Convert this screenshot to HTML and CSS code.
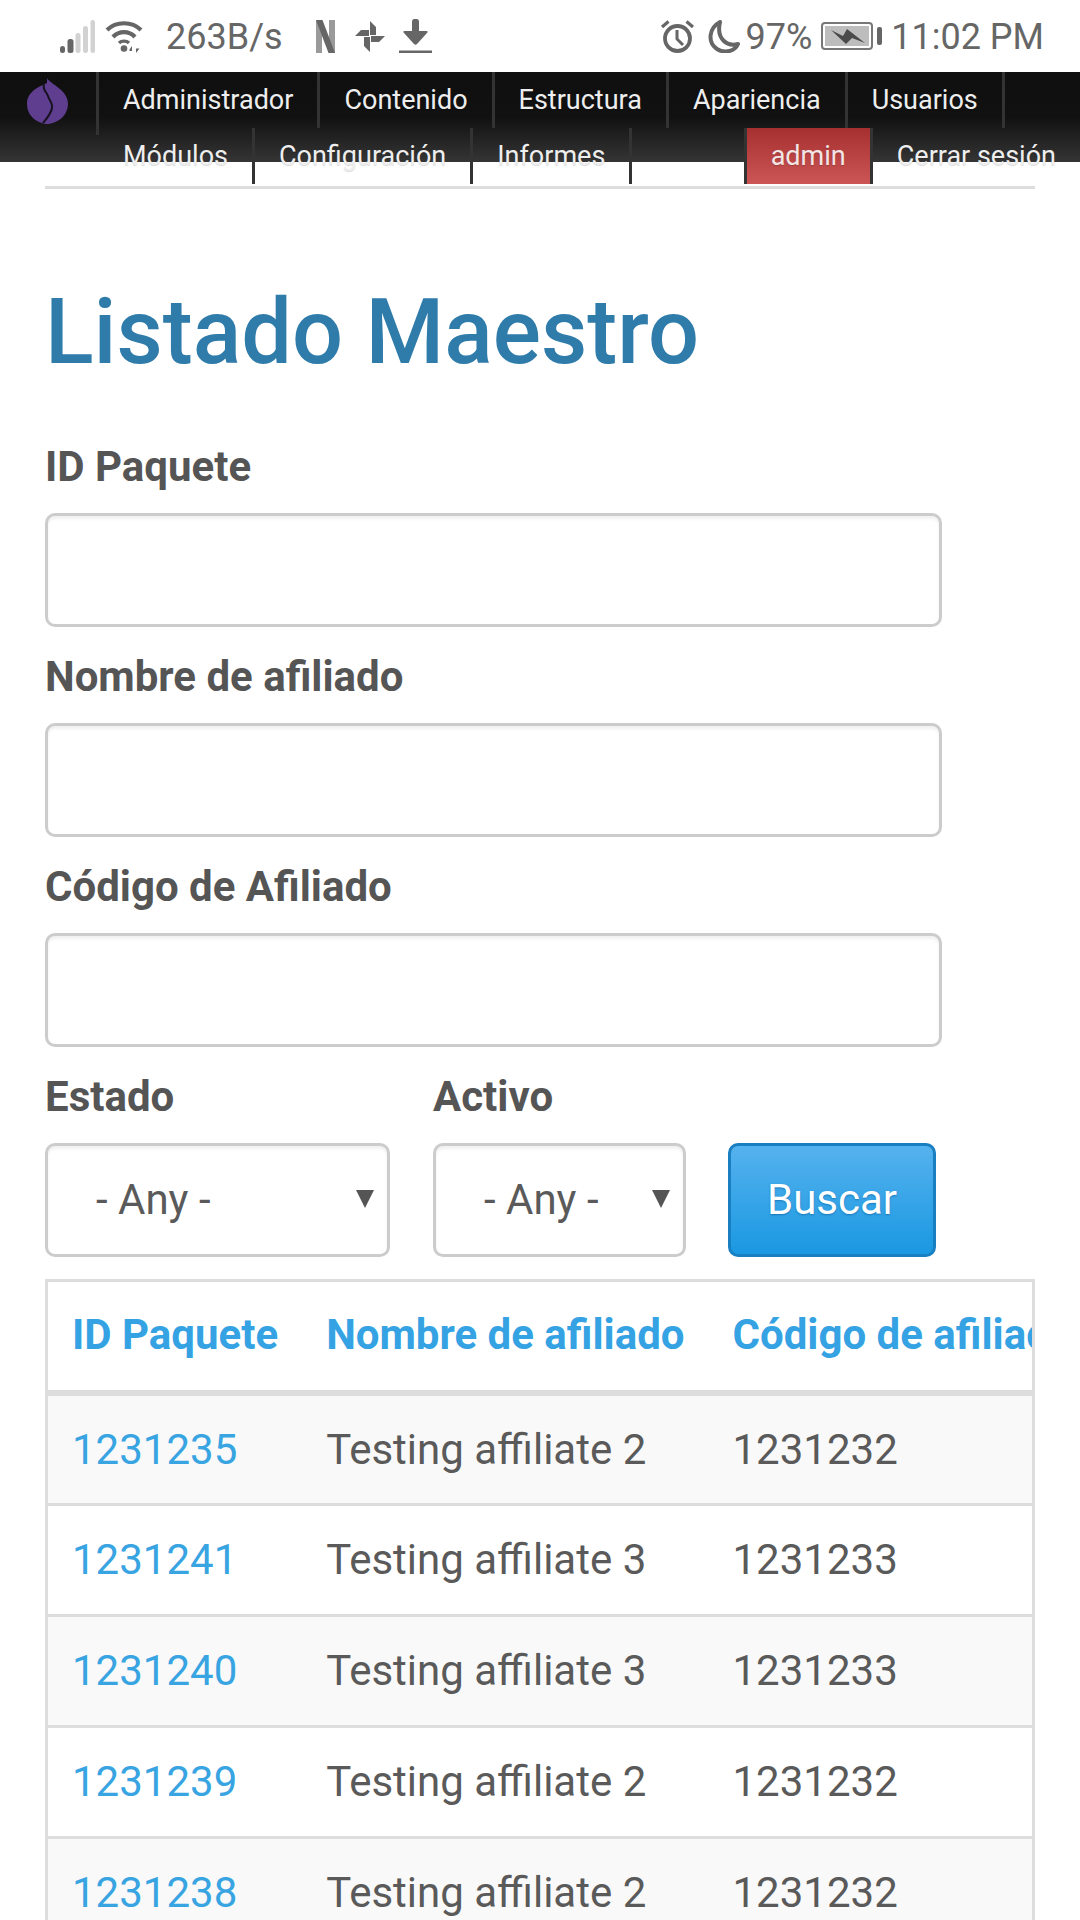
FILE: index.html
```html
<!DOCTYPE html>
<html lang="es">
<head>
<meta charset="utf-8">
<title>Listado Maestro</title>
<link rel="stylesheet" href="styles.css">
</head>
<body>
<header class="status">
  <div class="status-left">
    <svg class="i-signal" width="35" height="33" viewBox="0 0 35 33">
      <rect x="0" y="26" width="5" height="7" rx="2.5" fill="#666"/>
      <rect x="7.5" y="19" width="6" height="14" rx="2.5" fill="#666"/>
      <rect x="15.5" y="13" width="5" height="20" rx="2.5" fill="#d2d2d2"/>
      <rect x="23" y="6" width="5" height="27" rx="2.5" fill="#d2d2d2"/>
      <rect x="30.5" y="0" width="4.5" height="33" rx="2.2" fill="#d2d2d2"/>
    </svg>
    <svg class="i-wifi" width="38" height="33" viewBox="0 0 38 33">
      <path d="M2 10 C11 1 27 1 36 10" fill="none" stroke="#666" stroke-width="4.2"/>
      <path d="M8 17 C14 10.500 24 10.500 30 17" fill="none" stroke="#666" stroke-width="4.2"/>
      <path d="M14 23 C16.500 20.500 21.500 20.500 24 23" fill="none" stroke="#666" stroke-width="3.4"/>
      <circle cx="19" cy="28.500" r="3.300" fill="#666"/>
      <path d="M27 33V26L24.500 29.500V31H27ZM31 24V33L34.500 28.500H31Z" fill="#666"/>
    </svg>
    <span class="speed">263B/s</span>
    <svg class="i-n" width="19" height="33" viewBox="0 0 19 33">
      <rect x="0" y="0" width="6" height="33" fill="#9a9a9a"/>
      <rect x="13" y="0" width="6" height="33" fill="#9a9a9a"/>
      <path d="M0 0H6.500L19 33H12.500Z" fill="#666"/>
    </svg>
    <svg class="i-pin" width="30" height="31" viewBox="0 0 30 31">
      <path d="M15 14V0L21 6V14ZM16 15H30L24 21H16ZM15 16V31L9 25V16ZM14 15H0L6 9H14Z" fill="#666"/>
    </svg>
    <svg class="i-dl" width="33" height="34" viewBox="0 0 33 34">
      <path d="M13 2.500Q13 0 15 0H18Q20 0 20 2.500V12H27.500Q29.500 12 28 14L18 25Q16.500 26.500 15 25L5 14Q3.500 12 5.500 12H13Z" fill="#666"/>
      <rect x="0" y="31.500" width="33" height="2.500" fill="#666"/>
    </svg>
  </div>
  <div class="status-right">
    <svg class="i-alarm" width="35" height="33" viewBox="0 0 35 33">
      <circle cx="17.500" cy="18.500" r="12.500" fill="none" stroke="#666" stroke-width="3.800"/>
      <path d="M17 10V19L23 25" fill="none" stroke="#666" stroke-width="3"/>
      <path d="M2 7L8.500 1.500M33 7L26.500 1.500" fill="none" stroke="#666" stroke-width="3.200"/>
    </svg>
    <svg class="i-moon" width="33" height="33" viewBox="0 0 33 33">
      <path d="M13 2C2 8 0 22 10 29C18 34 28 31 31 24C20 27 9 19 13 2Z" fill="none" stroke="#666" stroke-width="4" stroke-linejoin="round"/>
    </svg>
    <span class="pct">97%</span>
    <svg class="i-batt" width="62" height="28" viewBox="0 0 62 28">
      <rect x="1" y="1" width="50" height="26" rx="3" fill="#fff" stroke="#777" stroke-width="2"/>
      <rect x="4" y="4" width="44" height="20" fill="#bdbdbd"/>
      <path d="M10 8L22 14L26 7L44 21L31 16L25 22Z" fill="#4a4a4a"/>
      <rect x="56" y="5" width="5" height="18" rx="2" fill="#666"/>
    </svg>
    <span class="time">11:02 PM</span>
  </div>
</header>

<nav class="toolbar">
  <div class="brand">
    <svg class="logo" width="42" height="46" viewBox="0 0 42 46">
      <path d="M20 0C23 6 42 12 41 27C40 38 32 44 22 46C10 46 0 38 0 26C0 14 11 9 20 5Z" fill="#5f3d8f"/>
      <path d="M17 6C15 12 20 14 21 18C22 22 26 25 25 30C24 36 20 40 16 45" fill="none" stroke="#17121f" stroke-width="2"/>
    </svg>
  </div>
  <div class="menus">
    <ul class="menu menu-top">
      <li class="item">Administrador</li>
      <li class="item">Contenido</li>
      <li class="item">Estructura</li>
      <li class="item">Apariencia</li>
      <li class="item">Usuarios</li>
    </ul>
    <div class="menu-second">
      <ul class="menu">
        <li class="item">Módulos</li>
        <li class="item">Configuración</li>
        <li class="item">Informes</li>
      </ul>
      <ul class="menu menu-user">
        <li class="item item-active">admin</li>
        <li class="item">Cerrar sesión</li>
      </ul>
    </div>
  </div>
</nav>

<main class="page">
  <hr class="rule">
  <h1 class="title">Listado Maestro</h1>
  <form class="filters">
    <div class="field">
      <label class="label" for="f1">ID Paquete</label>
      <input class="input" id="f1" type="text">
    </div>
    <div class="field">
      <label class="label" for="f2">Nombre de afiliado</label>
      <input class="input" id="f2" type="text">
    </div>
    <div class="field">
      <label class="label" for="f3">Código de Afiliado</label>
      <input class="input" id="f3" type="text">
    </div>
    <div class="inline">
      <div class="field field-estado">
        <label class="label" for="f4">Estado</label>
        <div class="select-wrap"><select class="select" id="f4"><option>- Any -</option></select></div>
      </div>
      <div class="field field-activo">
        <label class="label" for="f5">Activo</label>
        <div class="select-wrap"><select class="select" id="f5"><option>- Any -</option></select></div>
      </div>
      <button class="btn" type="button">Buscar</button>
    </div>
  </form>
  <div class="table-wrap">
    <table class="table">
      <thead>
        <tr><th>ID Paquete</th><th>Nombre de afiliado</th><th>Código de afiliado</th></tr>
      </thead>
      <tbody>
        <tr><td><a class="link">1231235</a></td><td>Testing affiliate 2</td><td>1231232</td></tr>
        <tr><td><a class="link">1231241</a></td><td>Testing affiliate 3</td><td>1231233</td></tr>
        <tr><td><a class="link">1231240</a></td><td>Testing affiliate 3</td><td>1231233</td></tr>
        <tr><td><a class="link">1231239</a></td><td>Testing affiliate 2</td><td>1231232</td></tr>
        <tr><td><a class="link">1231238</a></td><td>Testing affiliate 2</td><td>1231232</td></tr>
      </tbody>
    </table>
  </div>
</main>
</body>
</html>
```
FILE: styles.css
```css
* { box-sizing: border-box; }
html, body { margin: 0; padding: 0; }
body {
  width: 1080px;
  height: 1920px;
  overflow: hidden;
  background: #fff;
  font-family: Roboto, "Liberation Sans", sans-serif;
  color: #555;
}

/* status bar */
.status {
  height: 72px;
  display: flex;
  justify-content: space-between;
  align-items: center;
  padding: 0 36px 0 60px;
  color: #666;
  font-size: 36px;
}
.status-left, .status-right { display: flex; align-items: center; }
.status svg { display: block; }
.speed, .pct, .time { padding-top: 2px; }
.i-wifi { margin-left: 10px; }
.speed { margin-left: 23px; }
.i-n { margin-left: 33px; }
.i-pin { margin-left: 20px; }
.i-dl { margin-left: 14px; }
.i-moon { margin-left: 12px; }
.pct { margin-left: 5px; }
.i-batt { margin-left: 9px; }
.time { margin-left: 8px; }

/* toolbar */
.toolbar {
  height: 90px;
  display: flex;
  background: linear-gradient(#0f0f0f 0%, #111 50%, #353535 100%);
  color: #eee;
  font-size: 27px;
}
.brand {
  width: 99px;
  height: 63px;
  padding: 6px 0 0 27px;
  border-right: 3px solid #333;
  flex: none;
}
.logo { display: block; }
.menus { flex: 1; min-width: 0; }
.menu { display: flex; list-style: none; margin: 0; padding: 0; }
.menu-top { height: 56px; }
.menu-second { display: flex; justify-content: space-between; height: 56px; }
.item {
  padding: 0 24px;
  height: 56px;
  line-height: 56px;
  border-right: 3px solid #333;
  white-space: nowrap;
  text-shadow: 0 1px 1px rgba(0,0,0,.15);
}
.menu-user .item { border-right: 0; }
.menu-user .item-active {
  padding: 0 24px;
  background: linear-gradient(#a62f2f, #cc5555);
  border-left: 3px solid #333;
  border-right: 3px solid #333;
  color: #f2e5e5;
}

/* page */
.page { padding: 24px 45px 0; }
.rule { height: 3px; margin: 0; border: 0; background: #ddd; }
.title {
  margin: 94px 0 0;
  font-size: 90px;
  line-height: 100px;
  font-weight: 500;
  color: #2f7cab;
}
.filters { margin-top: 61px; }
.field { display: flex; flex-direction: column; }
.label {
  font-size: 42px;
  line-height: 46px;
  font-weight: 700;
  color: #555;
}
.input {
  display: block;
  width: 897px;
  height: 114px;
  margin: 23px 0 27px;
  border: 3px solid #ccc;
  border-radius: 10px;
  background: #fff;
  box-shadow: inset 0 3px 3px rgba(0,0,0,.06);
  outline: 0;
}
.inline { display: flex; align-items: flex-end; }
.field-estado { width: 345px; }
.field-activo { width: 253px; margin-left: 43px; }
.select-wrap { position: relative; margin-top: 23px; }
.select-wrap::after {
  content: "";
  position: absolute;
  right: 16px;
  top: 47px;
  border-left: 9px solid transparent;
  border-right: 9px solid transparent;
  border-top: 18px solid #555;
}
.select {
  display: block;
  width: 100%;
  height: 114px;
  padding: 0 48px 2px;
  border: 3px solid #ccc;
  border-radius: 10px;
  background: #fff;
  box-shadow: inset 0 3px 3px rgba(0,0,0,.06);
  font: 400 42px Roboto, sans-serif;
  color: #5a5a5a;
  appearance: none;
  outline: 0;
}
.btn {
  width: 208px;
  height: 114px;
  margin-left: 42px;
  padding: 0 0 2px;
  border: 3px solid #1a7fc0;
  border-radius: 10px;
  background: linear-gradient(#55b2ee, #1a98e2);
  color: #fff;
  font: 400 42px Roboto, sans-serif;
  text-shadow: 0 1px 2px rgba(0,80,140,.5);
}

/* table */
.table-wrap {
  width: 990px;
  margin-top: 22px;
  border: 3px solid #ddd;
  overflow: hidden;
}
.table { border-collapse: collapse; white-space: nowrap; }
.table th {
  height: 111px;
  padding: 0 24px 4px;
  text-align: left;
  font-size: 42px;
  font-weight: 700;
  color: #35a3e3;
  border-bottom: 6px solid #ddd;
}
.table td {
  height: 111px;
  padding: 0 24px;
  font-size: 42px;
  color: #5a5a5a;
  border-bottom: 3px solid #ddd;
}
.table tbody tr:nth-child(odd) { background: #f9f9f9; }
.link { color: #38a4e2; }
```
